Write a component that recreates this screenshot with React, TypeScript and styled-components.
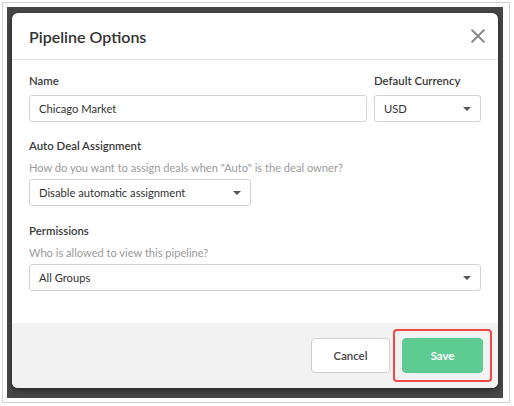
import React from "react";
import styled, { createGlobalStyle } from "styled-components";

const Global = createGlobalStyle`
  html, body { margin: 0; padding: 0; background: #ffffff; }
  body { font-family: "Lato", "Open Sans", "Liberation Sans", sans-serif; }
  * { box-sizing: border-box; }
`;

const Frame = styled.div`
  margin: 2px 0 0 2px;
  width: 508px;
  height: 401px;
  border: 1px solid #cfcfcf;
  padding: 4px 5px 4px 4px;
  background: #ffffff;
`;

const Backdrop = styled.div`
  width: 496px;
  height: 391px;
  background: #474747;
  padding: 6px 5px 10px 5px;
  display: flex;
`;

const Modal = styled.div`
  flex: 1;
  background: #ffffff;
  border-radius: 6px;
  box-shadow: 0 2px 6px rgba(0, 0, 0, 0.5);
  display: flex;
  flex-direction: column;
  overflow: hidden;
`;

const Header = styled.div`
  height: 47px;
  border-bottom: 1px solid #e6e6e6;
  display: flex;
  align-items: center;
  justify-content: space-between;
  padding: 0 10px 0 17px;
`;

const Title = styled.h1`
  margin: 0;
  font-size: 16px;
  font-weight: 600;
  color: #333333;
  letter-spacing: 0;
`;

const Close = styled.button`
  border: none;
  background: none;
  padding: 0;
  width: 20px;
  height: 20px;
  display: flex;
  align-items: center;
  justify-content: center;
  cursor: pointer;
`;

const Body = styled.div`
  flex: 1;
  padding: 12px 17px 0 17px;
  display: flex;
  flex-direction: column;
`;

const Row = styled.div`
  display: flex;
  gap: 7px;
`;

const Field = styled.div<{ $grow?: boolean; $width?: number; $mb?: number }>`
  display: flex;
  flex-direction: column;
  ${(p) => (p.$grow ? "flex: 1;" : "")}
  ${(p) => (p.$width ? `width: ${p.$width}px;` : "")}
  margin-bottom: ${(p) => p.$mb ?? 0}px;
`;

const Label = styled.div`
  font-size: 11.4px;
  font-weight: 600;
  color: #3a3a3a;
  line-height: 17px;
  margin-bottom: 6px;
`;

const Help = styled.div`
  font-size: 11.1px;
  color: #9a9a9a;
  line-height: 17px;
  margin-top: -1px;
  margin-bottom: 3px;
`;

const Box = styled.div<{ $width?: number }>`
  height: 27px;
  border: 1px solid #d3d3d3;
  border-radius: 3px;
  background: #ffffff;
  display: flex;
  align-items: center;
  justify-content: space-between;
  padding: 0 9px 0 9px;
  font-size: 11.2px;
  color: #333333;
  ${(p) => (p.$width ? `width: ${p.$width}px;` : "")}
`;

const Caret = styled.span`
  width: 0;
  height: 0;
  border-left: 4px solid transparent;
  border-right: 4px solid transparent;
  border-top: 4px solid #555555;
`;

const Footer = styled.div`
  height: 65px;
  background: #f2f2f2;
  display: flex;
  align-items: center;
  justify-content: flex-end;
  padding: 0 15px 0 0;
  gap: 12px;
`;

const Btn = styled.button<{ $primary?: boolean }>`
  width: ${(p) => (p.$primary ? 81 : 79)}px;
  height: 35px;
  border-radius: 4px;
  font-family: "Lato", "Open Sans", "Liberation Sans", sans-serif;
  font-size: 11.4px;
  font-weight: ${(p) => (p.$primary ? 700 : 600)};
  color: ${(p) => (p.$primary ? "#ffffff" : "#444444")};
  background: ${(p) => (p.$primary ? "#5ecb93" : "#ffffff")};
  border: 1px solid ${(p) => (p.$primary ? "#5ecb93" : "#cfcfcf")};
  cursor: pointer;
`;

const Highlight = styled.div`
  padding: 7px;
  border: 2px solid #f04848;
  border-radius: 4px;
  margin: 0 -9px 0 -9px;
  display: flex;
`;

export default function App() {
  return (
    <>
      <Global />
      <Frame>
        <Backdrop>
          <Modal>
            <Header>
              <Title>Pipeline Options</Title>
              <Close aria-label="Close">
                <svg width="14" height="14" viewBox="0 0 14 14">
                  <path d="M1.2 1.2 L12.8 12.8 M12.8 1.2 L1.2 12.8" stroke="#8a8a8a" strokeWidth="2" strokeLinecap="round" />
                </svg>
              </Close>
            </Header>
            <Body>
              <Row>
                <Field $grow $mb={15}>
                  <Label>Name</Label>
                  <Box>Chicago Market</Box>
                </Field>
                <Field $width={107} $mb={15}>
                  <Label>Default Currency</Label>
                  <Box>
                    USD
                    <Caret />
                  </Box>
                </Field>
              </Row>
              <Field $mb={16}>
                <Label>Auto Deal Assignment</Label>
                <Help>How do you want to assign deals when "Auto" is the deal owner?</Help>
                <Box $width={222}>
                  Disable automatic assignment
                  <Caret />
                </Box>
              </Field>
              <Field>
                <Label>Permissions</Label>
                <Help>Who is allowed to view this pipeline?</Help>
                <Box>
                  All Groups
                  <Caret />
                </Box>
              </Field>
            </Body>
            <Footer>
              <Btn>Cancel</Btn>
              <Highlight>
                <Btn $primary>Save</Btn>
              </Highlight>
            </Footer>
          </Modal>
        </Backdrop>
      </Frame>
    </>
  );
}
